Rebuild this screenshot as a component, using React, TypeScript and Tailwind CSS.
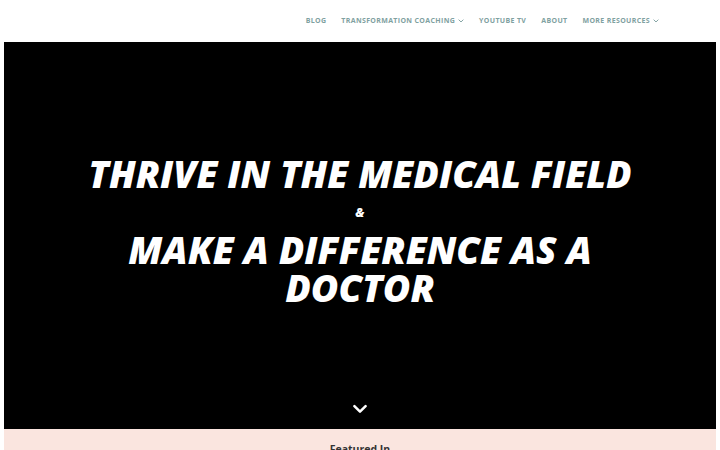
import React from 'react';

const nav = [
  { label: 'BLOG' },
  { label: 'TRANSFORMATION COACHING', drop: true },
  { label: 'YOUTUBE TV' },
  { label: 'ABOUT' },
  { label: 'MORE RESOURCES', drop: true },
];

function Chevron({ className }: { className?: string }) {
  return (
    <svg viewBox="0 0 10 6" className={className} fill="none" stroke="currentColor" strokeWidth="1.6" strokeLinecap="round" strokeLinejoin="round">
      <path d="M1.5 1.2 L5 4.6 L8.5 1.2" />
    </svg>
  );
}

export default function App() {
  return (
    <div className="min-h-screen bg-white" style={{ fontFamily: '"Open Sans", "Liberation Sans", sans-serif' }}>
      <header className="h-[42px] flex items-center justify-end pr-[61px]">
        <nav className="flex items-center gap-[15px] text-[7px] font-bold tracking-[0.05em] text-[#7fa1a1]">
          {nav.map(n => (
            <span key={n.label} className="flex items-center gap-[3px]">
              {n.label}
              {n.drop && <Chevron className="w-[6px] h-[4px]" />}
            </span>
          ))}
        </nav>
      </header>

      <section className="mx-[4px] h-[387px] bg-black flex flex-col items-center relative">
        <div className="pt-[110px] flex flex-col items-center text-white italic font-extrabold text-center">
          <h1 className="text-[37.5px] leading-[44px]">THRIVE IN THE MEDICAL FIELD</h1>
          <div className="text-[12px] leading-[16px] mt-[9px]">&amp;</div>
          <h2 className="text-[37.5px] leading-[38px] mt-[10px] w-[520px]">MAKE A DIFFERENCE AS A DOCTOR</h2>
        </div>
        <Chevron className="absolute bottom-[15px] left-1/2 -translate-x-1/2 w-[16px] h-[10px] text-white" />
      </section>

      <section className="mx-[4px] bg-[#fae5df] h-[21px] overflow-hidden flex justify-center">
        <div className="pt-[13px] text-[10.5px] leading-[14px] font-bold text-[#333]">Featured In</div>
      </section>
    </div>
  );
}
